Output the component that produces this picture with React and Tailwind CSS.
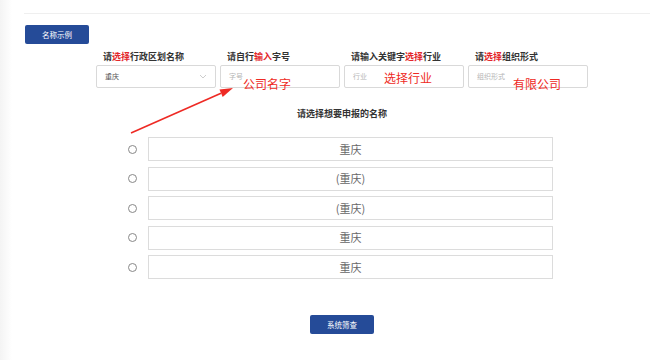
import React from "react";

const FONT = { fontFamily: '"Noto Sans CJK SC", "Noto Sans", sans-serif' };

// label with a red highlighted fragment
const Label = ({ pre, red, post }) => (
  <div className="pl-[7px] text-[9px] leading-[12px] font-bold text-[#333]">
    {pre}
    <span className="text-[#e3262b]">{red}</span>
    {post}
  </div>
);

const Field = ({ placeholder, dark, chevron }) => (
  <div className="h-[23px] border border-[#d9d9d9] rounded-[2px] bg-white flex items-center px-[8px]">
    <span className={`text-[7px] ${dark ? "text-[#555]" : "text-[#b5b5b5]"}`}>{placeholder}</span>
    {chevron && (
      <svg className="ml-auto" width="8" height="5" viewBox="0 0 8 5" fill="none">
        <path d="M1 1l3 3 3-3" stroke="#c0c0c0" strokeWidth="0.8" />
      </svg>
    )}
  </div>
);

const NameRow = ({ text }) => (
  <div className="flex items-center">
    <span className="w-[9px] h-[9px] rounded-full border border-[#888] bg-white" />
    <div className="ml-[11px] w-[405px] h-[24px] border border-[#dcdcdc] flex items-center justify-center text-[11px] text-[#666]">
      {text}
    </div>
  </div>
);

export default function App() {
  const fields = [
    { label: ["请", "选择", "行政区划名称"], placeholder: "重庆", dark: true, chevron: true },
    { label: ["请自行", "输入", "字号"], placeholder: "字号" },
    { label: ["请输入关键字", "选择", "行业"], placeholder: "行业" },
    { label: ["请", "选择", "组织形式"], placeholder: "组织形式" },
  ];
  const names = ["重庆", "(重庆)", "(重庆)", "重庆", "重庆"];

  return (
    <div className="w-[650px] h-[360px] flex bg-white overflow-hidden" style={FONT}>
      <div className="w-[12px] h-full bg-gradient-to-r from-[#f4f4f4] to-white" />
      <div className="flex-1 relative flex flex-col">
        <div className="ml-[12px] h-[14px] border-b border-[#efefef]" />

        <button className="mt-[11px] ml-[13px] w-[64px] h-[19px] rounded-[2px] bg-[#254b98] text-white text-[7.5px]">
          名称示例
        </button>

        <div className="ml-[84px] mt-[7px] grid grid-cols-[120px_120px_120px_120px] gap-x-[4px]">
          {fields.map((f, i) => (
            <Label key={i} pre={f.label[0]} red={f.label[1]} post={f.label[2]} />
          ))}
          {fields.map((f, i) => (
            <div key={i} className="mt-[2px]">
              <Field placeholder={f.placeholder} dark={f.dark} chevron={f.chevron} />
            </div>
          ))}
        </div>

        <div className="mt-[20px] ml-[285px] text-[9px] leading-[12px] font-bold text-[#333]">
          请选择想要申报的名称
        </div>

        <div className="mt-[17px] ml-[116px] flex flex-col gap-[5.5px]">
          {names.map((n, i) => (
            <NameRow key={i} text={n} />
          ))}
        </div>

        <button className="mt-[36px] ml-[298px] w-[64px] h-[19px] rounded-[2px] bg-[#254b98] text-white text-[7.5px]">
          系统筛查
        </button>

        {/* red annotations drawn over the form */}
        <span className="absolute left-[231px] top-[77px] text-[12px] leading-[14px] text-[#ee2a24]">公司名字</span>
        <span className="absolute left-[372px] top-[71px] text-[12px] leading-[14px] text-[#ee2a24]">选择行业</span>
        <span className="absolute left-[501px] top-[77px] text-[12px] leading-[14px] text-[#ee2a24]">有限公司</span>
        <svg className="absolute left-[110px] top-[80px]" width="130" height="60" viewBox="0 0 130 60">
          <path d="M9 53 L99 13.3" stroke="#ee2a24" strokeWidth="1.6" />
          <path d="M111 8 L100.7 16.9 L97.5 9.6 Z" fill="#ee2a24" />
        </svg>
      </div>
    </div>
  );
}
